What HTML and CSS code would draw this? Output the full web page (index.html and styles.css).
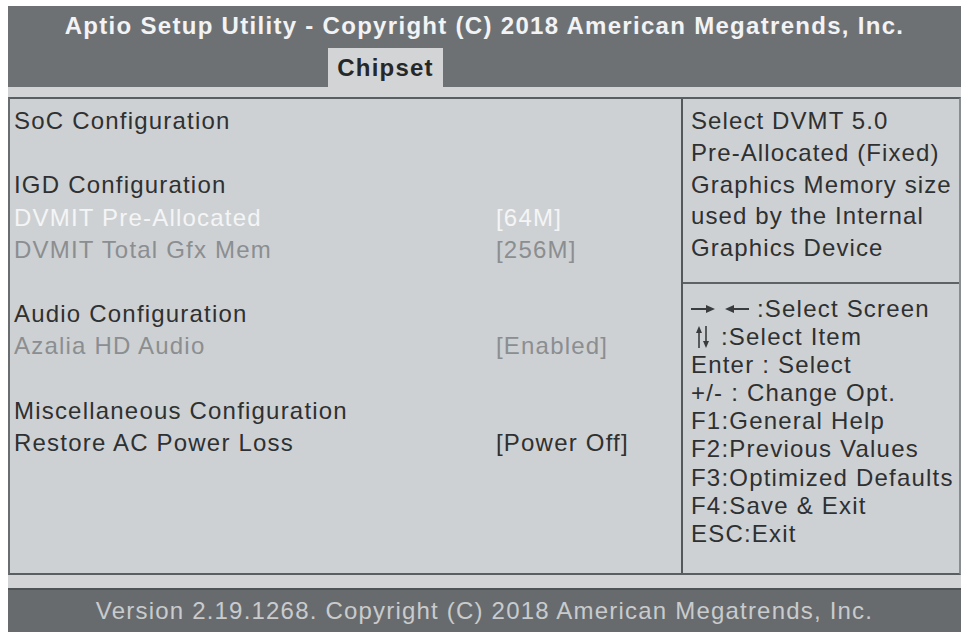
FILE: index.html
```html
<!DOCTYPE html>
<html>
<head>
<meta charset="utf-8">
<link rel="stylesheet" href="styles.css">
</head>
<body>
<div class="frame">
  <header class="header">
    <div class="title">Aptio Setup Utility - Copyright (C) 2018 American Megatrends, Inc.</div>
    <div class="tab">Chipset</div>
  </header>
  <div class="strip"></div>
  <main class="main">
    <section class="left">
      <div class="row"><span class="label">SoC Configuration</span><span></span></div>
      <div class="row blank"></div>
      <div class="row"><span class="label">IGD Configuration</span><span></span></div>
      <div class="row hl"><span class="label">DVMIT Pre-Allocated</span><span class="val">[64M]</span></div>
      <div class="row dim"><span class="label">DVMIT Total Gfx Mem</span><span class="val">[256M]</span></div>
      <div class="row blank"></div>
      <div class="row"><span class="label">Audio Configuration</span><span></span></div>
      <div class="row dim"><span class="label">Azalia HD Audio</span><span class="val">[Enabled]</span></div>
      <div class="row blank"></div>
      <div class="row"><span class="label">Miscellaneous Configuration</span><span></span></div>
      <div class="row"><span class="label">Restore AC Power Loss</span><span class="val">[Power Off]</span></div>
    </section>
    <aside class="right">
      <div class="help">
        <div>Select DVMT 5.0</div>
        <div>Pre-Allocated (Fixed)</div>
        <div>Graphics Memory size</div>
        <div>used by the Internal</div>
        <div>Graphics Device</div>
      </div>
      <div class="keys">
        <div class="keyline"><svg class="harrow" width="24" height="10" viewBox="0 0 24 10"><line x1="0" y1="5" x2="17" y2="5" stroke="#3a3b3c" stroke-width="2"/><polygon points="15,1 24,5 15,9" fill="#3a3b3c"/></svg><svg class="harrow second" width="24" height="10" viewBox="0 0 24 10"><line x1="7" y1="5" x2="24" y2="5" stroke="#3a3b3c" stroke-width="2"/><polygon points="9,1 0,5 9,9" fill="#3a3b3c"/></svg><span class="after-arrows">:Select Screen</span></div>
        <div class="keyline"><svg class="varrow" width="16" height="22" viewBox="0 0 16 22"><line x1="4" y1="4" x2="4" y2="22" stroke="#3a3b3c" stroke-width="1.6"/><polygon points="1,7 4,0 7,7" fill="#3a3b3c"/><line x1="11" y1="0" x2="11" y2="18" stroke="#3a3b3c" stroke-width="1.6"/><polygon points="8,15 11,22 14,15" fill="#3a3b3c"/></svg><span class="after-v">:Select Item</span></div>
        <div>Enter : Select</div>
        <div>+/- : Change Opt.</div>
        <div>F1:General Help</div>
        <div>F2:Previous Values</div>
        <div>F3:Optimized Defaults</div>
        <div>F4:Save &amp; Exit</div>
        <div>ESC:Exit</div>
      </div>
    </aside>
  </main>
  <div class="strip2"></div>
  <footer class="footer">Version 2.19.1268. Copyright (C) 2018 American Megatrends, Inc.</footer>
</div>
</body>
</html>
```
FILE: styles.css
```css
html, body {
  margin: 0;
  padding: 0;
  background: #ffffff;
}
body {
  font-family: "Liberation Sans", Arial, sans-serif;
  font-size: 24px;
  letter-spacing: 1.2px;
  color: #2f3031;
}
.frame {
  margin: 6px 0 0 8px;
  width: 953px;
  display: flex;
  flex-direction: column;
}
.header {
  background: #6e7174;
  height: 81px;
  padding-top: 6px;
  box-sizing: border-box;
  display: flex;
  flex-direction: column;
}
.title {
  line-height: 28px;
  text-align: center;
  color: #f2f3f4;
  font-weight: bold;
  letter-spacing: 1.3px;
}
.tab {
  margin: 8px 0 0 320px;
  width: 115px;
  height: 39px;
  line-height: 39px;
  background: #d2d4d6;
  color: #262728;
  font-weight: bold;
  text-align: center;
}
.strip {
  height: 10px;
  background: #d2d4d6;
}
.main {
  height: 478px;
  box-sizing: border-box;
  border-top: 2px solid #5b5e61;
  border-bottom: 2px solid #5b5e61;
  border-left: 2px solid #6a6d70;
  border-right: 2px solid #8a8d90;
  background: #ced1d3;
  display: flex;
}
.left {
  width: 673px;
  border-right: 2px solid #55585b;
  padding: 6px 0 0 4px;
  box-sizing: border-box;
}
.row {
  display: grid;
  grid-template-columns: 482px auto;
  height: 32.2px;
  line-height: 32px;
  white-space: nowrap;
}
.row.hl {
  color: #f4f5f6;
}
.row.dim {
  color: #8b8e91;
}
.right {
  flex: 1;
  display: flex;
  flex-direction: column;
}
.help {
  height: 185px;
  box-sizing: border-box;
  padding: 6px 0 0 8px;
  border-bottom: 2px solid #5f6265;
  line-height: 31.8px;
  white-space: nowrap;
  letter-spacing: 1.1px;
}
.keys {
  padding: 11px 0 0 8px;
  line-height: 28.1px;
  white-space: nowrap;
}
.keyline {
  display: flex;
  align-items: center;
  height: 28.1px;
}
.harrow {
  display: block;
  flex: none;
}
.harrow.second {
  margin-left: 10px;
}
.after-arrows {
  margin-left: 8px;
}
.varrow {
  display: block;
  flex: none;
  margin-left: 4px;
}
.after-v {
  margin-left: 10px;
}
.strip2 {
  height: 13px;
  background: #d2d4d6;
}
.footer {
  height: 44px;
  box-sizing: border-box;
  border-top: 2px solid #505356;
  background: #686b6e;
  color: #c9cbcd;
  line-height: 42px;
  text-align: center;
}
```
